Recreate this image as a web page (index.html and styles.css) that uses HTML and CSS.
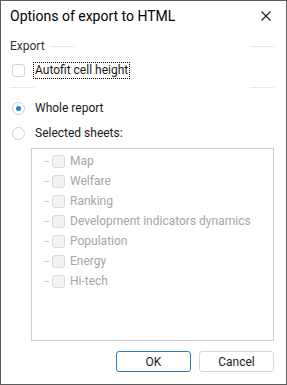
FILE: index.html
```html
<!DOCTYPE html>
<html lang="en">
<head>
    <meta charset="UTF-8">
    <meta name="viewport" content="width=device-width, initial-scale=1.0">
    <title>Options of export to HTML</title>
    <link rel="stylesheet" href="styles.css">
</head>
<body>
    <div class="dialog">
        <div class="titlebar">
            <span class="title">Options of export to HTML</span>
            <button class="close" aria-label="Close">
                <svg width="10" height="10" viewBox="0 0 10 10">
                    <path d="M0.5 0.5 L9.5 9.5 M9.5 0.5 L0.5 9.5" stroke="#1a1a1a" stroke-width="1.1" fill="none"/>
                </svg>
            </button>
        </div>

        <div class="content">
            <div class="group-head">
                <span class="group-label">Export</span>
                <span class="rule"></span>
                <span class="gap"></span>
                <span class="rule"></span>
            </div>

            <label class="option">
                <span class="checkbox"></span>
                <span class="option-text focused">Autofit cell height</span>
            </label>

            <div class="group-foot">
                <span class="rule"></span>
                <span class="gap"></span>
                <span class="rule"></span>
            </div>

            <label class="option radio-row first">
                <span class="radio checked"></span>
                <span class="option-text">Whole report</span>
            </label>
            <label class="option radio-row">
                <span class="radio"></span>
                <span class="option-text">Selected sheets:</span>
            </label>

            <div class="sheet-list">
                <div class="sheet"><span class="branch"></span><span class="checkbox disabled"></span><span class="sheet-name">Map</span></div>
                <div class="sheet"><span class="branch"></span><span class="checkbox disabled"></span><span class="sheet-name">Welfare</span></div>
                <div class="sheet"><span class="branch"></span><span class="checkbox disabled"></span><span class="sheet-name">Ranking</span></div>
                <div class="sheet"><span class="branch"></span><span class="checkbox disabled"></span><span class="sheet-name">Development indicators dynamics</span></div>
                <div class="sheet"><span class="branch"></span><span class="checkbox disabled"></span><span class="sheet-name">Population</span></div>
                <div class="sheet"><span class="branch"></span><span class="checkbox disabled"></span><span class="sheet-name">Energy</span></div>
                <div class="sheet"><span class="branch"></span><span class="checkbox disabled"></span><span class="sheet-name">Hi-tech</span></div>
            </div>

            <div class="buttons">
                <button class="btn btn-default">OK</button>
                <button class="btn">Cancel</button>
            </div>
        </div>
    </div>
</body>
</html>
```

FILE: styles.css
```css
body {
    margin: 0;
    padding: 0;
    background-color: #ffffff;
    font-family: Roboto, "Open Sans", sans-serif;
    color: #1a1a1a;
}

.dialog {
    width: 287px;
    height: 385px;
    box-sizing: border-box;
    border: 1px solid #5c5c5c;
    background-color: #ffffff;
    display: flex;
    flex-direction: column;
}

.titlebar {
    height: 29px;
    display: flex;
    align-items: center;
    justify-content: space-between;
    padding-left: 9px;
}

.title {
    font-size: 14px;
    color: #000000;
}

.close {
    width: 30px;
    height: 29px;
    margin-right: 5px;
    border: none;
    background: none;
    padding: 0;
    display: flex;
    align-items: center;
    justify-content: center;
}

.content {
    padding: 0 12px 0 9px;
    display: flex;
    flex-direction: column;
}

.group-head,
.group-foot {
    display: flex;
    align-items: center;
}

.group-head {
    height: 16px;
    margin-top: 8px;
}

.group-label {
    font-size: 12px;
    color: #333333;
    margin-right: 5px;
}

.rule {
    width: 24px;
    height: 1px;
    background-color: #e8e8e8;
}

.gap {
    flex: 1;
}

.group-foot {
    height: 1px;
    margin-top: 9px;
}

.option {
    display: flex;
    align-items: center;
    font-size: 12px;
    height: 16px;
    margin-top: 8px;
    margin-left: 2px;
}

.option-text {
    margin-left: 8px;
    line-height: 15px;
    padding: 0 1px;
    border: 1px solid transparent;
}

.option-text.focused {
    border: 1px dotted #000000;
}

.radio-row {
    margin-top: 9px;
}

.radio-row.first {
    margin-top: 12px;
}

.checkbox {
    width: 11px;
    height: 11px;
    border: 1px solid #d4d4d4;
    border-radius: 3px;
    background-color: #ffffff;
    flex-shrink: 0;
}

.checkbox.disabled {
    background-color: #f3f3f3;
    border-color: #dadada;
}

.radio {
    width: 11px;
    height: 11px;
    border: 1px solid #d0d0d0;
    border-radius: 50%;
    background-color: #ffffff;
    flex-shrink: 0;
    display: flex;
    align-items: center;
    justify-content: center;
}

.radio.checked::after {
    content: "";
    width: 5px;
    height: 5px;
    border-radius: 50%;
    background-color: #1f84d6;
}

.sheet-list {
    margin-top: 7px;
    margin-left: 21px;
    height: 193px;
    box-sizing: border-box;
    border: 1px solid #cfcfcf;
    padding-top: 2px;
    display: flex;
    flex-direction: column;
}

.sheet {
    height: 20px;
    display: flex;
    align-items: center;
    font-size: 12px;
    color: #a6a6a6;
}

.branch {
    width: 5px;
    height: 1px;
    background-color: #cccccc;
    margin-left: 12px;
    margin-right: 3px;
}

.sheet-name {
    margin-left: 5px;
}

.buttons {
    display: flex;
    justify-content: flex-end;
    gap: 8px;
    margin-top: 10px;
}

.btn {
    width: 75px;
    height: 21px;
    box-sizing: border-box;
    border: 1px solid #d6d6d6;
    border-radius: 3px;
    background-color: #ffffff;
    font-family: Roboto, "Open Sans", sans-serif;
    font-size: 12px;
    color: #1a1a1a;
    padding: 0;
}

.btn-default {
    border-color: #2e7dc4;
}
```
